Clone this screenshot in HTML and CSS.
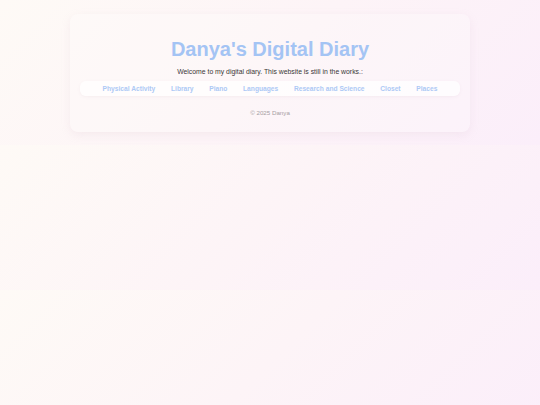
FILE: index.html
```html
<!DOCTYPE html>
<html lang="en">
<head>
<meta charset="utf-8">
<title>Danya's Digital Diary</title>
<link rel="stylesheet" href="styles.css">
</head>
<body>
  <div class="card">
    <h1 class="title">Danya's Digital Diary</h1>
    <p class="welcome">Welcome to my digital diary. This website is still in the works.:</p>
    <nav class="nav">
      <a href="#" class="nav-link">Physical Activity</a>
      <a href="#" class="nav-link">Library</a>
      <a href="#" class="nav-link">Piano</a>
      <a href="#" class="nav-link">Languages</a>
      <a href="#" class="nav-link">Research and Science</a>
      <a href="#" class="nav-link">Closet</a>
      <a href="#" class="nav-link">Places</a>
    </nav>
    <footer class="footer">© 2025 Danya</footer>
  </div>
</body>
</html>
```
FILE: styles.css
```css
html {
  margin: 0;
}
body {
  margin: 0;
  padding: 13.5px 0;
  font-family: "Liberation Sans", Arial, sans-serif;
  background: linear-gradient(135deg, #fefaf6 0%, #fdf4f7 50%, #fbeefa 100%);
}
.card {
  box-sizing: border-box;
  width: 400px;
  margin: 0 auto;
  padding: 24px 10px 16px;
  border-radius: 8px;
  background: rgba(255, 255, 255, 0.22);
  box-shadow: 0 3px 10px rgba(200, 170, 190, 0.14);
  text-align: center;
}
.title {
  margin: 0;
  font-size: 20px;
  line-height: 23px;
  font-weight: bold;
  color: #a4c4f4;
}
.welcome {
  margin: 7px 0 0;
  font-size: 6.85px;
  line-height: 8px;
  color: #3a3636;
}
.nav {
  margin-top: 5.3px;
  padding: 3.8px 0 3.2px;
  display: flex;
  justify-content: center;
  gap: 15.7px;
  border-radius: 6px;
  background: rgba(255, 255, 255, 0.75);
  box-shadow: 0 1px 3px rgba(200, 170, 190, 0.12);
}
.nav-link {
  font-size: 6.67px;
  line-height: 8px;
  font-weight: bold;
  color: #adc9f5;
  text-decoration: none;
}
.footer {
  margin-top: 12.8px;
  font-size: 6.2px;
  line-height: 7px;
  color: #a6a0a4;
}
```
